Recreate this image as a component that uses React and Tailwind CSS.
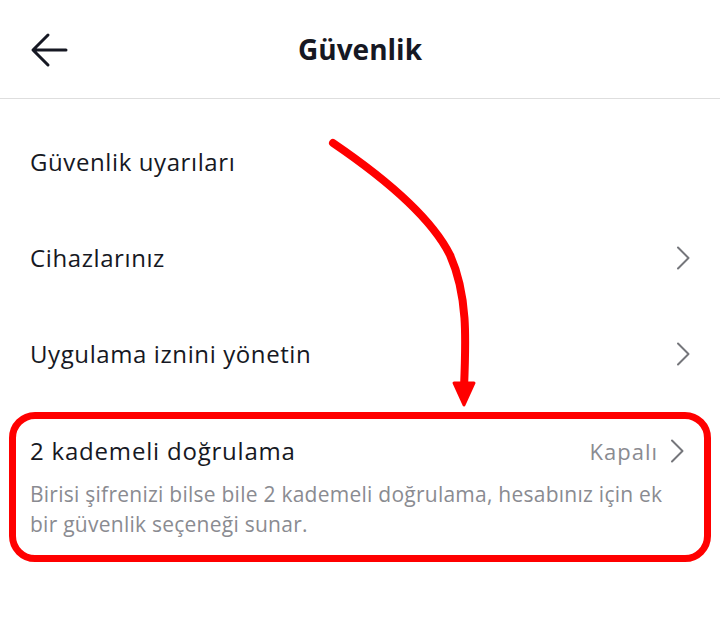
import React from "react";

const Chevron = () => (
  <svg width="14" height="24" viewBox="0 0 14 24" fill="none" className="text-[#75767b]">
    <path d="M2 1.5 L12.5 12 L2 22.5" stroke="currentColor" strokeWidth="2" strokeLinecap="round" strokeLinejoin="round" />
  </svg>
);

const Row = ({ label, chevron }) => (
  <div className="flex items-center justify-between h-[96px] pl-[30px] pr-[30px]">
    <span className="text-[24px] tracking-[0.6px] text-[#161823]">{label}</span>
    {chevron && <Chevron />}
  </div>
);

export default function App() {
  return (
    <div
      className="relative w-[720px] h-[638px] bg-white overflow-hidden"
      style={{ fontFamily: "'Open Sans', 'Noto Sans', sans-serif" }}
    >
      <header className="relative flex items-center justify-center h-[99px] border-b border-[#dedede]">
        <button className="absolute left-[30px] top-[32px]">
          <svg width="38" height="36" viewBox="0 0 38 36" fill="none" className="text-[#161823]">
            <path d="M36 18 H4 M18 3 L3 18 L18 33" stroke="currentColor" strokeWidth="3" strokeLinecap="round" strokeLinejoin="round" />
          </svg>
        </button>
        <h1 className="text-[28px] font-bold text-[#161823]">Güvenlik</h1>
      </header>

      <div className="pt-[15px]">
        <Row label="Güvenlik uyarıları" />
        <Row label="Cihazlarınız" chevron />
        <Row label="Uygulama iznini yönetin" chevron />
      </div>

      <div className="mx-[9px] mt-[10px] rounded-[26px] border-[7px] border-[#ff0000] pl-[14px] pr-[18px] pt-[14px] pb-[16px]">
        <div className="flex items-center justify-between pr-[2px]">
          <span className="text-[24px] tracking-[0.8px] text-[#161823]">2 kademeli doğrulama</span>
          <div className="flex items-center gap-[12px]">
            <span className="text-[22px] tracking-[1px] text-[#8a8b91]">Kapalı</span>
            <Chevron />
          </div>
        </div>
        <p className="mt-[10px] text-[21px] tracking-[0.25px] leading-[30px] text-[#8a8b91]">
          Birisi şifrenizi bilse bile 2 kademeli doğrulama, hesabınız için ek bir güvenlik seçeneği sunar.
        </p>
      </div>

      <svg className="absolute left-0 top-0 pointer-events-none" width="720" height="638" viewBox="0 0 720 638">
        <path
          d="M333 143 C 380 175, 430 215, 450 255 C 468 295, 466 340, 464 388"
          stroke="#ff0000"
          strokeWidth="8"
          strokeLinecap="round"
          fill="none"
        />
        <path d="M454 383 L474 383 L464 405 Z" fill="#ff0000" stroke="#ff0000" strokeWidth="3" strokeLinejoin="round" />
      </svg>
    </div>
  );
}
